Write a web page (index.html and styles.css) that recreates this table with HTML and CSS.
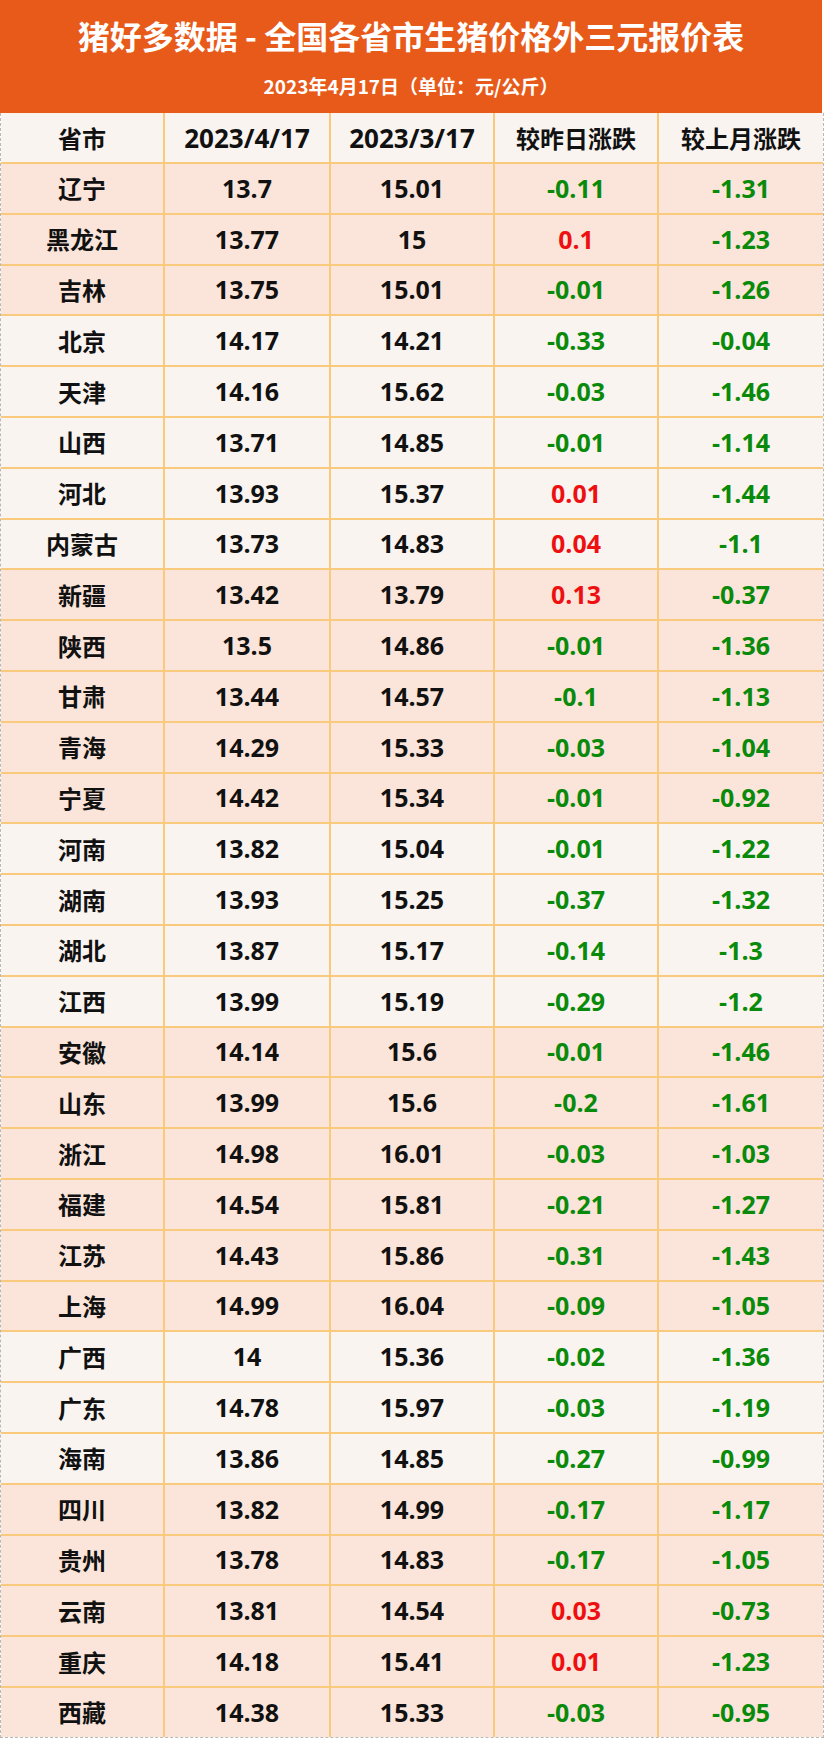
FILE: index.html
```html
<!DOCTYPE html>
<html lang="zh-CN">
<head>
<meta charset="utf-8">
<title>猪好多数据 - 全国各省市生猪价格外三元报价表</title>
<link rel="stylesheet" href="styles.css">
</head>
<body>
<div class="sheet">
  <header class="banner">
    <h1 class="title">猪好多数据 - 全国各省市生猪价格外三元报价表</h1>
    <p class="subtitle">2023年4月17日（单位：元/公斤）</p>
  </header>
  <div class="table">
    <div class="row head"><div class="cell">省市</div><div class="cell num">2023/4/17</div><div class="cell num">2023/3/17</div><div class="cell">较昨日涨跌</div><div class="cell">较上月涨跌</div></div>
    <div class="row pink"><div class="cell">辽宁</div><div class="cell num">13.7</div><div class="cell num">15.01</div><div class="cell num down">-0.11</div><div class="cell num down">-1.31</div></div>
    <div class="row pink"><div class="cell">黑龙江</div><div class="cell num">13.77</div><div class="cell num">15</div><div class="cell num up">0.1</div><div class="cell num down">-1.23</div></div>
    <div class="row pink"><div class="cell">吉林</div><div class="cell num">13.75</div><div class="cell num">15.01</div><div class="cell num down">-0.01</div><div class="cell num down">-1.26</div></div>
    <div class="row light"><div class="cell">北京</div><div class="cell num">14.17</div><div class="cell num">14.21</div><div class="cell num down">-0.33</div><div class="cell num down">-0.04</div></div>
    <div class="row light"><div class="cell">天津</div><div class="cell num">14.16</div><div class="cell num">15.62</div><div class="cell num down">-0.03</div><div class="cell num down">-1.46</div></div>
    <div class="row light"><div class="cell">山西</div><div class="cell num">13.71</div><div class="cell num">14.85</div><div class="cell num down">-0.01</div><div class="cell num down">-1.14</div></div>
    <div class="row light"><div class="cell">河北</div><div class="cell num">13.93</div><div class="cell num">15.37</div><div class="cell num up">0.01</div><div class="cell num down">-1.44</div></div>
    <div class="row light"><div class="cell">内蒙古</div><div class="cell num">13.73</div><div class="cell num">14.83</div><div class="cell num up">0.04</div><div class="cell num down">-1.1</div></div>
    <div class="row pink"><div class="cell">新疆</div><div class="cell num">13.42</div><div class="cell num">13.79</div><div class="cell num up">0.13</div><div class="cell num down">-0.37</div></div>
    <div class="row pink"><div class="cell">陕西</div><div class="cell num">13.5</div><div class="cell num">14.86</div><div class="cell num down">-0.01</div><div class="cell num down">-1.36</div></div>
    <div class="row pink"><div class="cell">甘肃</div><div class="cell num">13.44</div><div class="cell num">14.57</div><div class="cell num down">-0.1</div><div class="cell num down">-1.13</div></div>
    <div class="row pink"><div class="cell">青海</div><div class="cell num">14.29</div><div class="cell num">15.33</div><div class="cell num down">-0.03</div><div class="cell num down">-1.04</div></div>
    <div class="row pink"><div class="cell">宁夏</div><div class="cell num">14.42</div><div class="cell num">15.34</div><div class="cell num down">-0.01</div><div class="cell num down">-0.92</div></div>
    <div class="row light"><div class="cell">河南</div><div class="cell num">13.82</div><div class="cell num">15.04</div><div class="cell num down">-0.01</div><div class="cell num down">-1.22</div></div>
    <div class="row light"><div class="cell">湖南</div><div class="cell num">13.93</div><div class="cell num">15.25</div><div class="cell num down">-0.37</div><div class="cell num down">-1.32</div></div>
    <div class="row light"><div class="cell">湖北</div><div class="cell num">13.87</div><div class="cell num">15.17</div><div class="cell num down">-0.14</div><div class="cell num down">-1.3</div></div>
    <div class="row light"><div class="cell">江西</div><div class="cell num">13.99</div><div class="cell num">15.19</div><div class="cell num down">-0.29</div><div class="cell num down">-1.2</div></div>
    <div class="row pink"><div class="cell">安徽</div><div class="cell num">14.14</div><div class="cell num">15.6</div><div class="cell num down">-0.01</div><div class="cell num down">-1.46</div></div>
    <div class="row pink"><div class="cell">山东</div><div class="cell num">13.99</div><div class="cell num">15.6</div><div class="cell num down">-0.2</div><div class="cell num down">-1.61</div></div>
    <div class="row pink"><div class="cell">浙江</div><div class="cell num">14.98</div><div class="cell num">16.01</div><div class="cell num down">-0.03</div><div class="cell num down">-1.03</div></div>
    <div class="row pink"><div class="cell">福建</div><div class="cell num">14.54</div><div class="cell num">15.81</div><div class="cell num down">-0.21</div><div class="cell num down">-1.27</div></div>
    <div class="row pink"><div class="cell">江苏</div><div class="cell num">14.43</div><div class="cell num">15.86</div><div class="cell num down">-0.31</div><div class="cell num down">-1.43</div></div>
    <div class="row pink"><div class="cell">上海</div><div class="cell num">14.99</div><div class="cell num">16.04</div><div class="cell num down">-0.09</div><div class="cell num down">-1.05</div></div>
    <div class="row light"><div class="cell">广西</div><div class="cell num">14</div><div class="cell num">15.36</div><div class="cell num down">-0.02</div><div class="cell num down">-1.36</div></div>
    <div class="row light"><div class="cell">广东</div><div class="cell num">14.78</div><div class="cell num">15.97</div><div class="cell num down">-0.03</div><div class="cell num down">-1.19</div></div>
    <div class="row light"><div class="cell">海南</div><div class="cell num">13.86</div><div class="cell num">14.85</div><div class="cell num down">-0.27</div><div class="cell num down">-0.99</div></div>
    <div class="row pink"><div class="cell">四川</div><div class="cell num">13.82</div><div class="cell num">14.99</div><div class="cell num down">-0.17</div><div class="cell num down">-1.17</div></div>
    <div class="row pink"><div class="cell">贵州</div><div class="cell num">13.78</div><div class="cell num">14.83</div><div class="cell num down">-0.17</div><div class="cell num down">-1.05</div></div>
    <div class="row pink"><div class="cell">云南</div><div class="cell num">13.81</div><div class="cell num">14.54</div><div class="cell num up">0.03</div><div class="cell num down">-0.73</div></div>
    <div class="row pink"><div class="cell">重庆</div><div class="cell num">14.18</div><div class="cell num">15.41</div><div class="cell num up">0.01</div><div class="cell num down">-1.23</div></div>
    <div class="row pink last"><div class="cell">西藏</div><div class="cell num">14.38</div><div class="cell num">15.33</div><div class="cell num down">-0.03</div><div class="cell num down">-0.95</div></div>
  </div>
</div>
</body>
</html>
```

FILE: styles.css
```css
html, body {
  margin: 0;
  padding: 0;
  background: #ffffff;
}

.sheet {
  width: 824px;
  font-family: "Open Sans", "Noto Sans CJK SC", sans-serif;
  font-weight: 700;
}

.banner {
  width: 822px;
  height: 113px;
  background: #e85a1a;
  color: #ffffff;
  display: flex;
  flex-direction: column;
  align-items: center;
  box-sizing: border-box;
  padding-top: 12px;
}

.title {
  margin: 0;
  font-family: "Noto Sans CJK SC", sans-serif;
  font-size: 32px;
  font-weight: 700;
  line-height: 46px;
  letter-spacing: 0;
}

.subtitle {
  margin: 0;
  margin-top: 13px;
  font-family: "Noto Sans CJK SC", sans-serif;
  font-size: 19px;
  font-weight: 700;
  line-height: 30px;
}

.table {
  width: 824px;
  box-sizing: border-box;
  border-left: 1px dashed #b8b8b8;
  border-right: 1px dashed #b8b8b8;
  border-bottom: 1px dashed #b8b8b8;
}

.row {
  display: grid;
  grid-template-columns: 164px 166px 164px 164px 164px;
  height: 50.8px;
  box-sizing: border-box;
  border-bottom: 2px solid #f9ca7c;
}

.row.head {
  height: 51px;
  background: #f9f4f0;
}

.row.light {
  background: #f9f4f0;
}

.row.pink {
  background: #fbe5da;
}

.row.last {
  border-bottom: none;
  height: 48.8px;
}

.cell {
  display: flex;
  align-items: center;
  justify-content: center;
  font-family: "Noto Sans CJK SC", sans-serif;
  font-size: 24px;
  font-weight: 700;
  color: #111111;
  border-right: 2px solid #f9ca7c;
  line-height: 1;
}

.cell:last-child {
  border-right: none;
}

.cell.num {
  font-family: "Open Sans", "Noto Sans CJK SC", sans-serif;
  font-size: 25px;
}

.row.head .cell.num {
  font-size: 26px;
}

.cell.down {
  color: #0a8a0a;
}

.cell.up {
  color: #ee1010;
}
```
